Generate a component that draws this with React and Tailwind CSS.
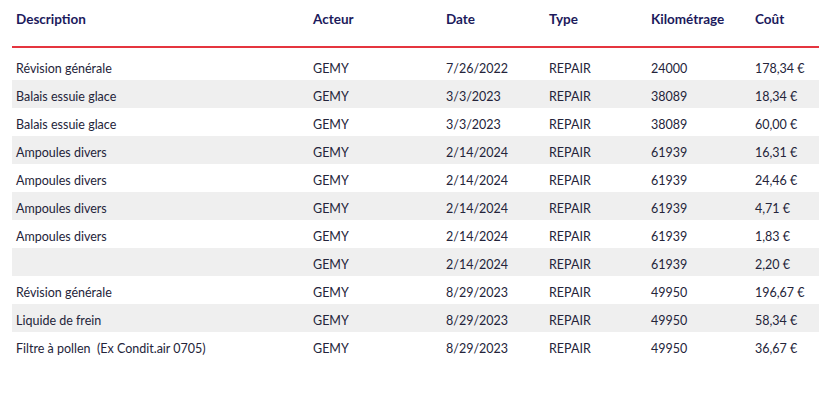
const rows = [
  ['Révision générale', 'GEMY', '7/26/2022', 'REPAIR', '24000', '178,34 €'],
  ['Balais essuie glace', 'GEMY', '3/3/2023', 'REPAIR', '38089', '18,34 €'],
  ['Balais essuie glace', 'GEMY', '3/3/2023', 'REPAIR', '38089', '60,00 €'],
  ['Ampoules divers', 'GEMY', '2/14/2024', 'REPAIR', '61939', '16,31 €'],
  ['Ampoules divers', 'GEMY', '2/14/2024', 'REPAIR', '61939', '24,46 €'],
  ['Ampoules divers', 'GEMY', '2/14/2024', 'REPAIR', '61939', '4,71 €'],
  ['Ampoules divers', 'GEMY', '2/14/2024', 'REPAIR', '61939', '1,83 €'],
  ['', 'GEMY', '2/14/2024', 'REPAIR', '61939', '2,20 €'],
  ['Révision générale', 'GEMY', '8/29/2023', 'REPAIR', '49950', '196,67 €'],
  ['Liquide de frein', 'GEMY', '8/29/2023', 'REPAIR', '49950', '58,34 €'],
  ['Filtre à pollen  (Ex Condit.air 0705)', 'GEMY', '8/29/2023', 'REPAIR', '49950', '36,67 €'],
]

const headers = ['Description', 'Acteur', 'Date', 'Type', 'Kilométrage', 'Coût']
const widths = ['w-[297px]', 'w-[133px]', 'w-[103px]', 'w-[102px]', 'w-[104px]', 'w-[68px]']

export default function App() {
  return (
    <div className="min-h-screen bg-white pl-3 font-['Lato',sans-serif]">
      <table className="w-[807px] table-fixed border-collapse">
        <thead>
          <tr className="h-[47px] border-b-2 border-[#e5353f]">
            {headers.map((h, i) => (
              <th
                key={h}
                className={`${widths[i]} pl-1 pb-[8px] text-left align-middle text-[13.5px] font-bold text-[#1c1a5c]`}
              >
                {h}
              </th>
            ))}
          </tr>
        </thead>
        <tbody>
          <tr className="h-[5px]">
            <td colSpan={6}></td>
          </tr>
          {rows.map((r, i) => (
            <tr key={i} className={`h-[28px] ${i % 2 === 1 ? 'bg-[#efefef]' : ''}`}>
              {r.map((c, j) => (
                <td
                  key={j}
                  className="whitespace-pre pl-1 pt-[6px] align-middle text-[12.5px] text-[#24243a]"
                >
                  {c}
                </td>
              ))}
            </tr>
          ))}
        </tbody>
      </table>
    </div>
  )
}
